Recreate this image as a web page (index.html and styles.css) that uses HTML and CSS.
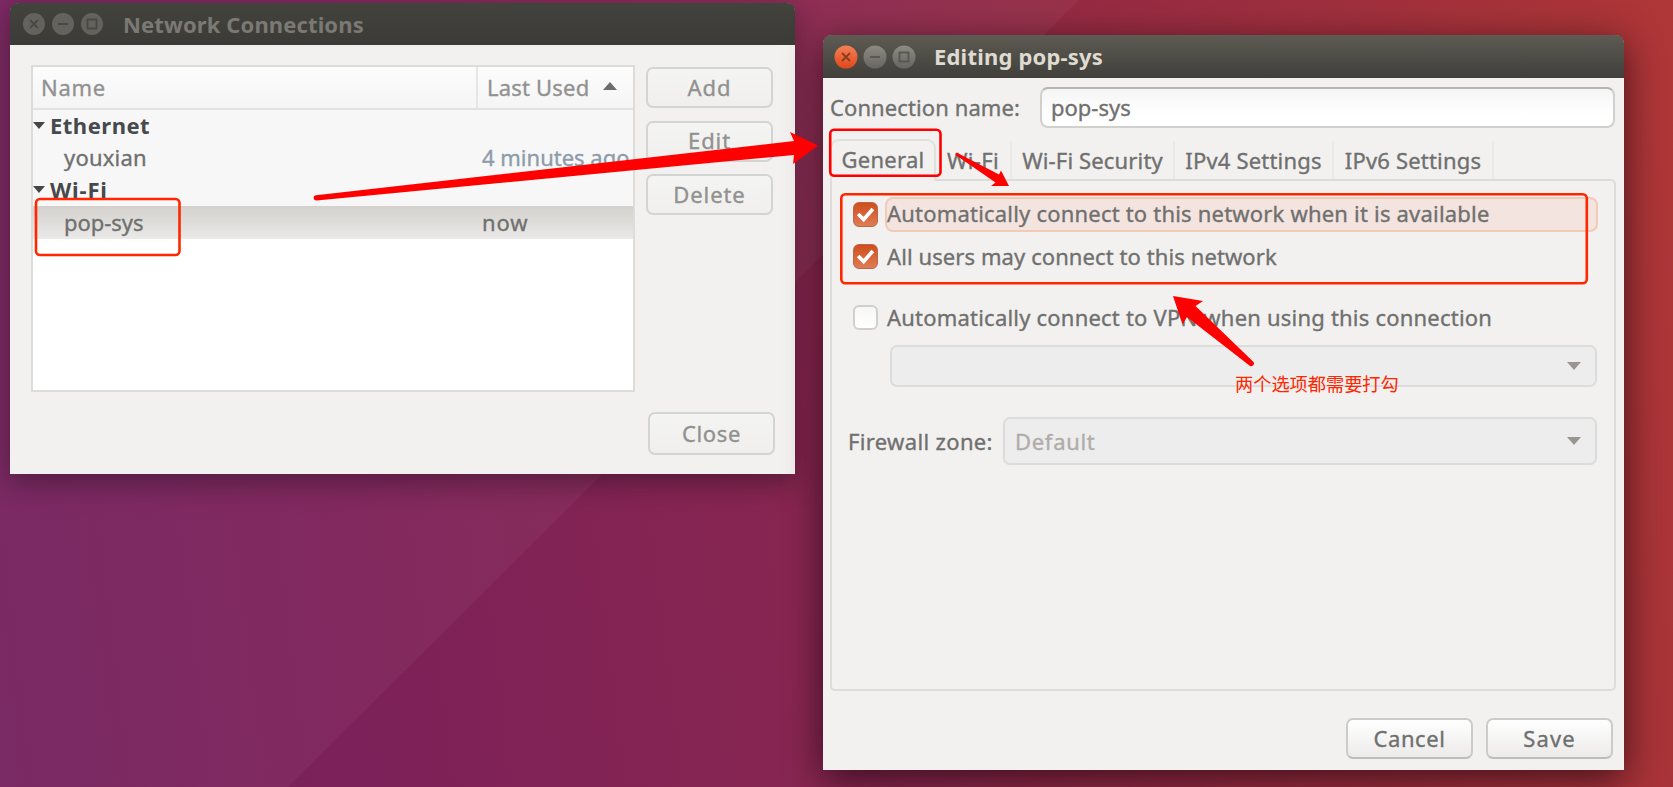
FILE: index.html
```
<!DOCTYPE html>
<html lang="en">
<head>
<meta charset="utf-8">
<title>Network Connections</title>
<link rel="stylesheet" href="styles.css">
</head>
<body>
<main class="desktop">
  <svg class="wallpaper" viewBox="0 0 1673 787"><path d="M0 0H1079L288 787H0Z" fill="#fff" fill-opacity=".04"/></svg>

  <section class="window connections">
    <header class="titlebar">
      <svg class="controls" width="84" height="28" viewBox="0 0 84 28">
        <g fill="#64625c"><circle cx="14" cy="14" r="11"/><circle cx="43" cy="14" r="11"/><circle cx="72" cy="14" r="11"/></g>
        <g fill="none" stroke="#494843" stroke-width="1.800"><path d="M10 10l8 8m0-8l-8 8M38 14h10"/><rect x="67.500" y="9.500" width="9" height="9"/></g>
      </svg>
      <h1 class="title">Network Connections</h1>
    </header>
    <div class="list-area">
      <div class="tree">
        <div class="tree-head"><span class="col-name">Name</span><span class="col-used">Last Used</span><svg class="sort" width="14" height="8" viewBox="0 0 14 8"><path d="M0 8L7 0l7 8z"/></svg></div>
        <div class="tree-row group"><svg width="12" height="7" viewBox="0 0 12 7"><path d="M0 0h12L6 7z"/></svg><span class="group-a">Ethernet</span></div>
        <div class="tree-row"><span class="item you">youxian</span><span class="used ago">4 minutes ago</span></div>
        <div class="tree-row group"><svg width="12" height="7" viewBox="0 0 12 7"><path d="M0 0h12L6 7z"/></svg><span class="group-b">Wi-Fi</span></div>
        <div class="tree-row selected"><span class="item">pop-sys</span><span class="used now">now</span></div>
      </div>
      <div class="side-buttons">
        <button class="btn flat">Add</button>
        <button class="btn flat">Edit</button>
        <button class="btn flat">Delete</button>
      </div>
    </div>
    <footer class="close-row"><button class="btn flat close">Close</button></footer>
  </section>

  <section class="window editor">
    <header class="titlebar active">
      <svg class="controls" width="84" height="28" viewBox="0 0 84 28">
        <defs>
          <linearGradient id="orange" x2="0" y2="1"><stop stop-color="#f58058"/><stop offset="1" stop-color="#e0481a"/></linearGradient>
          <linearGradient id="grey" x2="0" y2="1"><stop stop-color="#8c8a83"/><stop offset="1" stop-color="#67655f"/></linearGradient>
        </defs>
        <circle cx="14" cy="14" r="11.500" fill="url(#orange)"/><circle cx="43" cy="14" r="11.500" fill="url(#grey)"/><circle cx="72" cy="14" r="11.500" fill="url(#grey)"/>
        <g fill="none" stroke="#57554f" stroke-width="1.800"><path d="M10 10l8 8m0-8l-8 8" stroke="#8a3c22"/><path d="M38 14h10"/><rect x="67.500" y="9.500" width="9" height="9"/></g>
      </svg>
      <h1 class="title">Editing pop-sys</h1>
    </header>
    <div class="name-row"><label class="name-label">Connection name:</label><div class="entry">pop-sys</div></div>
    <nav class="tabs">
      <span class="tab current">General</span><span class="tab wifi">Wi-Fi</span><span class="tab security">Wi-Fi Security</span><span class="tab v4">IPv4 Settings</span><span class="tab v6">IPv6 Settings</span>
    </nav>
    <div class="panel">
      <div class="check-row first"><span class="check on"><svg viewBox="0 0 25 25"><path d="M4.500 12l6 6L20.500 6.500"/></svg></span><span class="check-text focused">Automatically connect to this network when it is available</span></div>
      <div class="check-row second"><span class="check on"><svg viewBox="0 0 25 25"><path d="M4.500 12l6 6L20.500 6.500"/></svg></span><span class="check-text users">All users may connect to this network</span></div>
      <div class="check-row third"><span class="check"></span><span class="check-text">Automatically connect to VPN when using this connection</span></div>
      <div class="combo vpn"><svg width="14" height="8" viewBox="0 0 14 8"><path d="M0 0h14L7 8z"/></svg></div>
      <div class="zone-row"><label class="zone-label">Firewall zone:</label><div class="combo zone"><span>Default</span><svg width="14" height="8" viewBox="0 0 14 8"><path d="M0 0h14L7 8z"/></svg></div></div>
    </div>
    <footer class="actions"><button class="btn cancel">Cancel</button><button class="btn save">Save</button></footer>
  </section>

  <svg class="marks" viewBox="0 0 1673 787">
    <g fill="none" stroke="#ff2600" stroke-width="2.600">
      <rect x="36" y="199" width="143.500" height="56" rx="4"/>
      <rect x="841.300" y="194.300" width="745.500" height="89" rx="4"/>
      <rect x="830.200" y="129.800" width="110.300" height="46" rx="4" stroke="#f00"/>
    </g>
    <g fill="#f00">
      <path d="M316 195.200L794 141l-4-9 28 13.500L793 164l1-9L316.500 200.500a2.600 2.600 0 0 1-.5-5.300z"/>
      <path d="M958 153.200l41 21.300 2-4 8 15.500H991l4.500-3.500L956 155.300a1.300 1.300 0 0 1 2-2.100z"/>
      <path d="M1173 296l30 5-7.500 5 57.500 55.500a2.600 2.600 0 0 1-3.600 4L1187 317l-4.500 7.500z"/>
    </g>
  </svg>
  <p class="note">两个选项都需要打勾</p>
</main>
</body>
</html>
```
FILE: styles.css
```
* { box-sizing: border-box; }
body {
  margin: 0;
  font: 22px/32px "Noto Sans", "Open Sans", sans-serif;
  color: #70706f;
  -webkit-text-stroke: .35px;
}
.desktop {
  position: relative;
  width: 1673px;
  height: 787px;
  overflow: hidden;
  background: linear-gradient(83deg, #75225e 0%, #7d2159 22%, #882650 48%, #962b42 68%, #a93438 95%, #b03737 100%);
}
.wallpaper, .marks { position: absolute; inset: 0; width: 1673px; height: 787px; }
.window {
  position: absolute;
  isolation: isolate;
  display: flex;
  flex-direction: column;
  background: #f2f1ef;
  border-radius: 9px 9px 0 0;
}
.connections { left: 10px; top: 3px; width: 785px; height: 471px; box-shadow: 0 8px 28px rgba(20, 10, 20, .42); }
.editor { left: 823px; top: 35px; width: 801px; height: 735px; box-shadow: 0 9px 36px rgba(15, 0, 8, .65); }
.titlebar {
  display: flex;
  align-items: center;
  height: 42px;
  flex: none;
  padding-left: 10px;
  border-radius: 8px 8px 0 0;
  background: linear-gradient(#43433e, #3c3b37);
}
.titlebar.active { height: 43px; padding-left: 9px; background: linear-gradient(#5d5b52, #403f3a); }
.controls { flex: none; }
.title { margin: 0 0 0 19px; font-size: 22px; line-height: 32px; font-weight: 700; letter-spacing: .12px; color: #7b7973; -webkit-text-stroke: 0; }
.active .title { letter-spacing: .2px; color: #dfdbd2; margin: -1px 0 0 18px; }

.list-area { display: flex; justify-content: space-between; padding: 20px 22px 0 21px; }
.tree { width: 604px; height: 327px; background: #fff; border: 2px solid #dddcd9; }
.tree-head {
  display: flex;
  align-items: center;
  height: 43px;
  padding-left: 8px;
  background: linear-gradient(#fcfcfc, #f5f5f5);
  border-bottom: 2px solid #e2e2e2;
  color: #929291;
}
.col-name { width: 435px; margin-top: -2px; letter-spacing: .7px; }
.col-used { width: 127px; height: 41px; line-height: 41px; padding-left: 9px; border-left: 2px solid #e6e6e5; letter-spacing: .2px; white-space: nowrap; }
.sort { fill: #6c6c6a; margin-top: -3px; }
.tree-row { display: flex; height: 32px; line-height: 30px; background: #f7f7f7; }
.group { align-items: center; padding-left: 0; color: #464a4c; font-weight: 700; gap: 5px; -webkit-text-stroke: 0; }
.group svg { fill: #464646; margin-top: -2px; }
.group span { margin-top: -2px; }
.group-a { letter-spacing: .5px; }
.group-b { letter-spacing: .85px; }
.item { width: 418px; margin-left: 31px; letter-spacing: -.05px; }
.you { letter-spacing: .2px; }
.used { white-space: nowrap; }
.ago { color: #8d9cab; }
.now { letter-spacing: .9px; }
.selected { height: 33px; line-height: 32px; background: linear-gradient(#d3d0cd, #ebeae8); }
.side-buttons { display: flex; flex-direction: column; gap: 12.5px; width: 127px; padding-top: 2px; }
.btn {
  height: 41px;
  width: 127px;
  padding: 0 0 2px;
  font: inherit;
  letter-spacing: .9px;
  color: #70706f;
  -webkit-text-stroke: .35px;
  border: 2px solid #cbcbc9;
  border-bottom-color: #bdbdbb;
  border-radius: 7px;
  background: linear-gradient(#fff, #ecebea);
}
.flat { color: #919190; border-color: #d3d4d4; background: linear-gradient(#f4f4f3, #f0efee); }
.close-row { display: flex; justify-content: flex-end; padding: 20px 20px 0 0; }
.close { height: 43px; letter-spacing: .65px; }

.name-row { display: flex; align-items: center; justify-content: space-between; padding: 9px 9px 0 7px; }
.name-label { margin-top: -2px; letter-spacing: .1px; }
.entry {
  width: 575px;
  height: 41px;
  line-height: 36px;
  padding-left: 9px;
  border: 2px solid #d0d0ce;
  border-top-color: #b5b5b3;
  border-radius: 8px;
  background: linear-gradient(#f5f5f5, #fff 70%);
}
.tabs { position: relative; z-index: 1; display: flex; height: 41px; margin: 10px 9px 0 7px; padding-top: 3px; }
.tab { height: 38px; line-height: 38px; text-align: center; white-space: nowrap; border-right: 2px solid #e9e9e7; }
.current { width: 106px; height: 42px; line-height: 36px; margin-top: -2px; background: #f2f1ef; border: 2px solid #e0e0dd; border-bottom: 0; border-radius: 9px 9px 0 0; letter-spacing: .25px; }
.wifi { width: 76px; letter-spacing: .3px; }
.security { width: 163px; letter-spacing: .15px; }
.v4 { width: 159px; letter-spacing: .18px; }
.v6 { width: 160px; letter-spacing: .18px; }
.panel { width: 786px; height: 512px; margin-left: 7px; border: 2px solid #dcdcda; border-radius: 0 5px 5px 5px; }
.check-row { display: flex; align-items: center; gap: 8px; height: 25px; padding: 0 16px 0 21px; }
.first { height: 35px; margin-top: 16px; }
.second { margin-top: 12px; }
.third { margin-top: 36px; }
.check { flex: none; width: 25px; height: 25px; border: 2px solid #cfcfcd; border-radius: 6px; background: linear-gradient(#f7f7f7, #fff); }
.check.on { border: 1px solid #b9684a; background: linear-gradient(#cf4d1b, #df7d55); }
.check svg { display: block; width: 23px; height: 23px; fill: none; stroke: #fff; stroke-width: 4; }
.check-text { flex: 1; margin-top: -2px; padding-left: 1px; letter-spacing: .21px; white-space: nowrap; }
.users { letter-spacing: .09px; }
.focused { height: 35px; line-height: 28px; margin: 0 0 0 -1px; padding-left: 0; letter-spacing: .2px; border: 2px solid #f3c9b8; border-radius: 8px; background: #f3e4df; }
.combo { display: flex; align-items: center; justify-content: flex-end; padding-right: 14px; border: 2px solid #dcdcdc; border-radius: 7px; background: #ededed; color: #b0aca8; }
.combo svg { fill: #999690; }
.vpn { height: 42px; margin: 15px 17px 0 58px; }
.zone-row { display: flex; align-items: center; justify-content: space-between; margin-top: 30px; padding: 0 17px 0 16px; }
.zone-label { letter-spacing: .35px; }
.zone { width: 594px; height: 48px; justify-content: space-between; padding-left: 10px; letter-spacing: .7px; }
.actions { display: flex; justify-content: flex-end; gap: 13px; padding: 27px 11px 0 0; }
.cancel { letter-spacing: .6px; }
.save { letter-spacing: 1.1px; }

.note { position: absolute; left: 1235px; top: 369px; margin: 0; font: 18.2px/28px "Noto Sans CJK SC", sans-serif; color: #ff2600; white-space: nowrap; -webkit-text-stroke: 0; }
```
